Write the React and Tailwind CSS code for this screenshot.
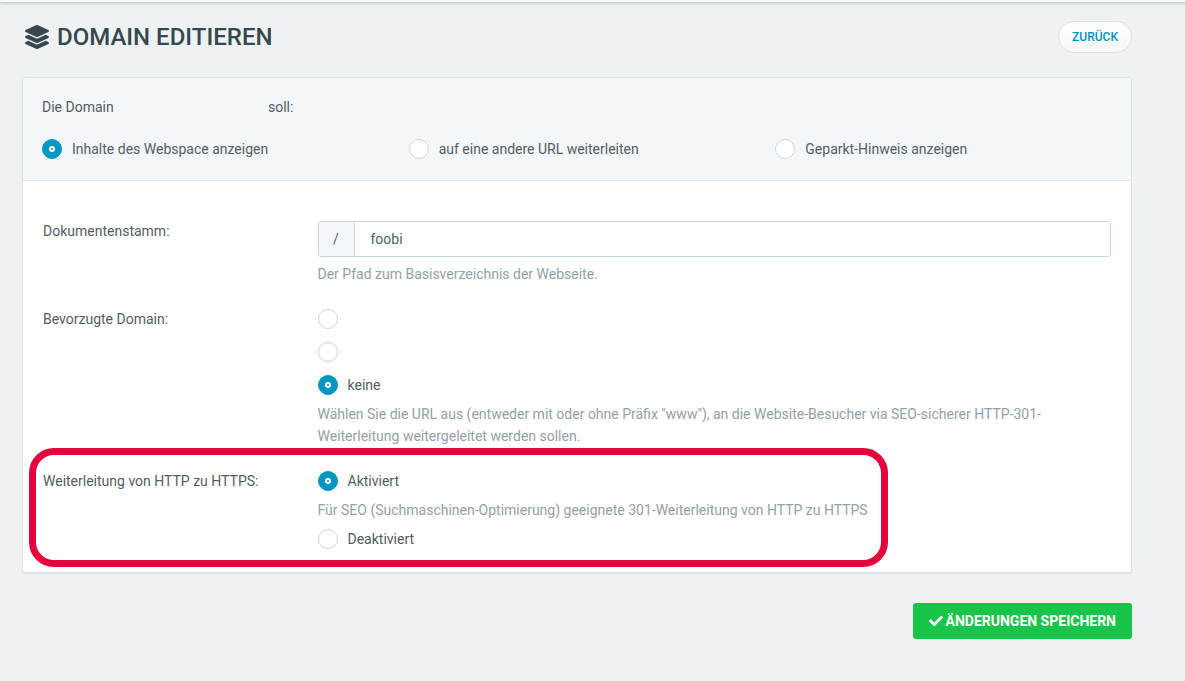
import { useState } from "react";
import { FaCheck, FaLayerGroup } from "react-icons/fa";

const Radio = ({ name, value, selected, onSelect, label, ariaLabel }) => (
  <label className="flex items-center gap-2.5 leading-5 cursor-pointer">
    <input
      type="radio"
      name={name}
      value={value}
      checked={selected === value}
      onChange={() => onSelect(value)}
      aria-label={ariaLabel}
      className="
        appearance-none grid place-content-center shrink-0 size-5 rounded-full
        border border-[#cdd5da] bg-white cursor-pointer
        checked:border-[#0097c0] checked:bg-[#0097c0]
        checked:before:block checked:before:size-1.5 checked:before:rounded-full
        checked:before:border-2 checked:before:border-white
      "
    />
    {label && <span>{label}</span>}
  </label>
);

const Help = ({ children }) => (
  <p className="leading-[22px] text-[#93a0a9]">{children}</p>
);

const App = () => {
  const [target, setTarget] = useState("webspace");
  const [root, setRoot] = useState("foobi");
  const [preferred, setPreferred] = useState("none");
  const [https, setHttps] = useState("on");

  return (
    <div className="min-h-screen bg-[#eef2f3] font-['Roboto',sans-serif] text-sm text-[#535d64]">
      <div className="h-[3px] bg-[#f7f9fa] border-b border-[#c8d4dc] shadow-[0_1px_3px_rgba(0,0,0,0.15)]" />

      <main className="pl-[22px] pr-[53px] pt-[18px] pb-10">
        <header className="flex items-center justify-between">
          <h1 className="flex items-center gap-2 pl-[3px] text-2xl font-medium uppercase text-[#37474f]">
            <FaLayerGroup className="size-6" />
            Domain editieren
          </h1>
          <button
            type="button"
            className="h-8 px-[13px] rounded-full border border-[#dde0e2] bg-linear-to-b from-white to-[#f5f7f8] text-xs font-medium uppercase text-[#0092bd] cursor-pointer"
          >
            Zurück
          </button>
        </header>

        <form onSubmit={(e) => e.preventDefault()}>
          <section className="mt-6 bg-white border border-[#dce2e6] rounded-[3px] shadow-[0_1px_1px_rgba(0,0,0,0.05)]">
            {/* domain target */}
            <div className="px-[19px] pt-[18px] pb-[21px] bg-[#f3f7fa] border-b border-[#dfe5e9] rounded-t-[2px]">
              <p className="flex leading-[22px]">
                <span className="w-[226px]">Die Domain</span>
                <span>soll:</span>
              </p>
              <div className="mt-[21px] grid grid-cols-3 gap-[30px]">
                <Radio name="target" value="webspace" selected={target} onSelect={setTarget} label="Inhalte des Webspace anzeigen" />
                <Radio name="target" value="redirect" selected={target} onSelect={setTarget} label="auf eine andere URL weiterleiten" />
                <Radio name="target" value="parked" selected={target} onSelect={setTarget} label="Geparkt-Hinweis anzeigen" />
              </div>
            </div>

            {/* settings */}
            <div className="flex flex-col gap-6 px-5 pt-10 pb-[23px]">
              <div className="grid grid-cols-4 gap-[30px]">
                <label htmlFor="docroot" className="leading-5">Dokumentenstamm:</label>
                <div className="col-span-3 flex flex-col gap-1.5">
                  <div className="flex h-9 border border-[#c9d5dd] rounded-[3px] overflow-hidden">
                    <span className="flex items-center justify-center w-9 bg-[#f3f7fa] border-r border-[#c9d5dd]">/</span>
                    <input
                      id="docroot"
                      type="text"
                      value={root}
                      onChange={(e) => setRoot(e.target.value)}
                      className="flex-1 min-w-0 px-4 bg-white outline-none"
                    />
                  </div>
                  <Help>Der Pfad zum Basisverzeichnis der Webseite.</Help>
                </div>
              </div>

              <div className="grid grid-cols-4 gap-[30px]" role="radiogroup" aria-labelledby="preferred-label">
                <span id="preferred-label" className="leading-5">Bevorzugte Domain:</span>
                <div className="col-span-3 flex flex-col gap-2">
                  <div className="flex flex-col gap-[13px]">
                    <Radio name="preferred" value="www" selected={preferred} onSelect={setPreferred} ariaLabel="Mit www" />
                    <Radio name="preferred" value="plain" selected={preferred} onSelect={setPreferred} ariaLabel="Ohne www" />
                    <Radio name="preferred" value="none" selected={preferred} onSelect={setPreferred} label="keine" />
                  </div>
                  <Help>
                    Wählen Sie die URL aus (entweder mit oder ohne Präfix "www"), an die Website-Besucher via SEO-sicherer HTTP-301-Weiterleitung weitergeleitet werden sollen.
                  </Help>
                </div>
              </div>

              <div className="relative grid grid-cols-4 gap-[30px]" role="radiogroup" aria-labelledby="https-label">
                {/* highlight frame around the https setting */}
                <div className="absolute -top-[23px] -bottom-[18px] -left-3.5 w-[859px] border-[7px] border-[#e6003c] rounded-[25px] pointer-events-none" />
                <span id="https-label" className="leading-5">Weiterleitung von HTTP zu HTTPS:</span>
                <div className="col-span-3 flex flex-col gap-2">
                  <Radio name="https" value="on" selected={https} onSelect={setHttps} label="Aktiviert" />
                  <Help>Für SEO (Suchmaschinen-Optimierung) geeignete 301-Weiterleitung von HTTP zu HTTPS</Help>
                  <Radio name="https" value="off" selected={https} onSelect={setHttps} label="Deaktiviert" />
                </div>
              </div>
            </div>
          </section>

          <div className="mt-[30px] flex justify-end">
            <button
              type="submit"
              className="flex items-center gap-[3px] h-9 px-4 rounded-[3px] bg-[#19c548] text-sm font-bold uppercase text-white cursor-pointer"
            >
              <FaCheck className="size-3.5" />
              Änderungen speichern
            </button>
          </div>
        </form>
      </main>
    </div>
  );
};

export default App;
